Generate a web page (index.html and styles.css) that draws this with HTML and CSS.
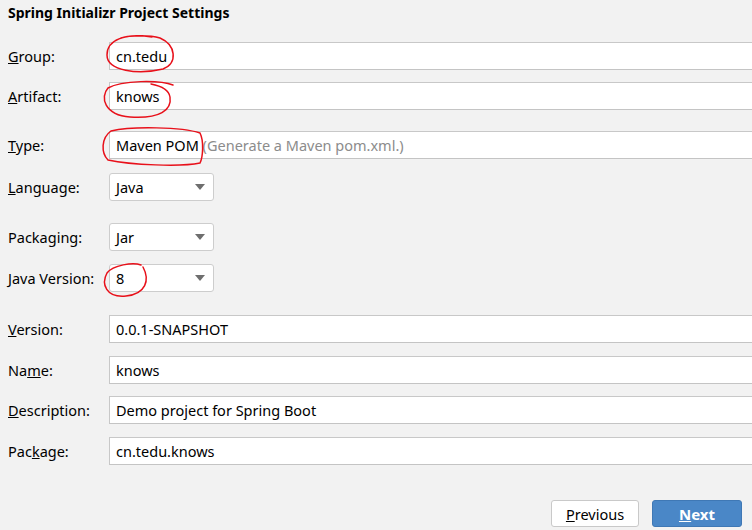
FILE: index.html
```html
<!DOCTYPE html>
<html>
<head>
<meta charset="utf-8">
<link rel="stylesheet" href="styles.css">
</head>
<body>
<div class="page">
  <h1 class="title">Spring Initializr Project Settings</h1>
  <div class="form">
    <div class="row r-group"><label class="lbl"><u>G</u>roup:</label><div class="field">cn.tedu</div></div>
    <div class="row r-artifact"><label class="lbl"><u>A</u>rtifact:</label><div class="field">knows</div></div>
    <div class="row r-type"><label class="lbl"><u>T</u>ype:</label><div class="field">Maven POM <span class="hint">(Generate a Maven pom.xml.)</span></div></div>
    <div class="row r-lang"><label class="lbl"><u>L</u>anguage:</label><div class="combo"><span>Java</span><span class="arrow"></span></div></div>
    <div class="row r-pack"><label class="lbl">Packaging:</label><div class="combo"><span>Jar</span><span class="arrow"></span></div></div>
    <div class="row r-java"><label class="lbl"><u>J</u>ava Version:</label><div class="combo"><span>8</span><span class="arrow"></span></div></div>
    <div class="row r-version"><label class="lbl"><u>V</u>ersion:</label><div class="field">0.0.1-SNAPSHOT</div></div>
    <div class="row r-name"><label class="lbl">Na<u>m</u>e:</label><div class="field">knows</div></div>
    <div class="row r-desc"><label class="lbl"><u>D</u>escription:</label><div class="field">Demo project for Spring Boot</div></div>
    <div class="row r-pkg"><label class="lbl">Pac<u>k</u>age:</label><div class="field">cn.tedu.knows</div></div>
  </div>
  <div class="buttons">
    <button class="btn"><u>P</u>revious</button>
    <button class="btn primary"><u>N</u>ext</button>
  </div>
  <svg class="marks" width="752" height="530" viewBox="0 0 752 530">
    <path d="M152 37 C124 33 107 40 107 55 C107 71 138 75 163 69 C178 63 176 45 160 38 C150 35 131 35 121 38"/>
    <path d="M173 85 C160 80 122 80 108 88 C100 97 104 115 130 117 C160 119 172 110 170 97 C169 90 161 86 151 84"/>
    <path d="M111 131 C132 126 182 127 200 133 C204 141 203 157 200 163 C181 167 131 165 108 160 C101 153 101 138 111 131"/>
    <path d="M143 267 C150 280 146 294 126 296 C106 298 101 284 107 273 C113 265 133 262 141 265"/>
  </svg>
</div>
</body>
</html>
```

FILE: styles.css
```css
html, body {
  margin: 0;
  padding: 0;
  background: #f2f2f2;
}
body {
  font-family: "Noto Sans", "Open Sans", sans-serif;
  font-size: 14.5px;
  color: #000;
}
.page {
  position: relative;
  width: 752px;
  height: 530px;
  overflow: hidden;
}
.title {
  margin: 0;
  padding: 3px 0 0 8px;
  font-size: 14px;
  font-weight: bold;
  line-height: 20px;
}
.form {
  display: flex;
  flex-direction: column;
}
.row {
  display: flex;
  align-items: center;
  height: 28px;
}
.r-group { margin-top: 19px; }
.r-artifact { margin-top: 12px; }
.r-type { margin-top: 21px; }
.r-lang { margin-top: 14px; }
.r-pack { margin-top: 22px; }
.r-java { margin-top: 13px; }
.r-version { margin-top: 23px; }
.r-name { margin-top: 13px; }
.r-desc { margin-top: 12px; }
.r-pkg { margin-top: 13px; }
.lbl {
  width: 101px;
  padding-left: 8px;
  flex: none;
}
.field {
  flex: 1;
  height: 26px;
  background: #fff;
  border-top: 1px solid #c8c8c8;
  border-bottom: 1px solid #c4c4c4;
  border-left: 1px solid #c8c8c8;
  display: flex;
  align-items: center;
  padding-left: 6px;
  white-space: pre;
}
.hint {
  color: #8c8c8c;
}
.combo {
  height: 26px;
  background: #fff;
  border: 1px solid #cdcdcd;
  border-radius: 3px;
  display: flex;
  align-items: center;
  justify-content: space-between;
  padding: 0 8px 0 6px;
  box-sizing: content-box;
  width: 89px;
}
.arrow {
  width: 0;
  height: 0;
  border-left: 5px solid transparent;
  border-right: 5px solid transparent;
  border-top: 6px solid #6e6e6e;
}
.buttons {
  position: absolute;
  left: 551px;
  top: 500px;
  display: flex;
  gap: 13px;
}
.btn {
  font-family: inherit;
  font-size: 14.5px;
  height: 27px;
  width: 88px;
  background: #fff;
  border: 1px solid #c9c9c9;
  border-radius: 3px;
  color: #000;
  padding: 0;
}
.btn.primary {
  width: 90px;
  background: #4a87c7;
  border-color: #3f78b5;
  color: #fff;
  font-weight: bold;
  font-size: 15px;
}
.marks {
  position: absolute;
  left: 0;
  top: 0;
  pointer-events: none;
}
.marks path {
  fill: none;
  stroke: #e8101a;
  stroke-width: 1.5;
  stroke-linecap: round;
}
```
